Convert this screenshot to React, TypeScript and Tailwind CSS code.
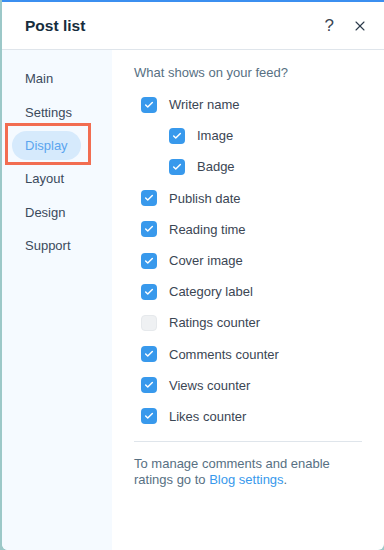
import { Check, X } from "lucide-react";

type Option = { label: string; checked: boolean; nested?: boolean };

const menu = ["Main", "Settings", "Display", "Layout", "Design", "Support"];

const options: Option[] = [
  { label: "Writer name", checked: true },
  { label: "Image", checked: true, nested: true },
  { label: "Badge", checked: true, nested: true },
  { label: "Publish date", checked: true },
  { label: "Reading time", checked: true },
  { label: "Cover image", checked: true },
  { label: "Category label", checked: true },
  { label: "Ratings counter", checked: false },
  { label: "Comments counter", checked: true },
  { label: "Views counter", checked: true },
  { label: "Likes counter", checked: true },
];

function Checkbox({ checked }: { checked: boolean }) {
  if (!checked) {
    return <span className="h-4 w-4 shrink-0 rounded-[4px] border border-[#e6e9ec] bg-[#eff1f3]" />;
  }
  return (
    <span className="flex h-4 w-4 shrink-0 items-center justify-center rounded-[4px] bg-[#3899ec]">
      <Check size={10} strokeWidth={3.5} className="text-white" />
    </span>
  );
}

export default function App() {
  return (
    <div
      className="flex h-[550px] w-[384px] bg-[#9cc8c8] pl-[2px] text-[#3b4654]"
      style={{ fontFamily: '"Liberation Sans", Arial, sans-serif' }}
    >
      <div className="relative flex flex-1 flex-col overflow-hidden rounded-b-[6px] bg-white">
        <div className="h-[2px] bg-[#3b8ff0]" />
        <header className="flex h-[48px] items-center border-b border-[#dfe5eb] pl-[23px] pr-[16px]">
          <h1 className="flex-1 pt-[1px] text-[15.5px] font-bold text-[#162d3d]">Post list</h1>
          <span className="mr-[18px] text-[17px] text-[#3b4654]">?</span>
          <X size={16} strokeWidth={1.6} className="text-[#2b3a4a]" />
        </header>

        <div className="flex flex-1">
          <nav className="flex w-[110px] flex-col bg-[#f5faff] pt-[12px]">
            {menu.map((item) => (
              <div key={item} className="flex h-[33.4px] items-center pl-[10px]">
                {item === "Display" ? (
                  <span className="rounded-full bg-[#d6eafc] px-[13px] py-[6px] text-[13px] leading-[17px] text-[#5ba5ef]">
                    {item}
                  </span>
                ) : (
                  <span className="px-[13px] text-[13px] leading-[17px] text-[#3b4a5c]">{item}</span>
                )}
              </div>
            ))}
          </nav>

          <main className="flex-1 pl-[22px] pr-[22px] pt-[14px]">
            <p className="text-[13px] leading-[17px] text-[#577083]">What shows on your feed?</p>
            <ul className="mt-[8px] flex flex-col pl-[7px]">
              {options.map((o) => (
                <li
                  key={o.label}
                  className={`flex h-[31.2px] items-center gap-[12px] ${o.nested ? "pl-[28px]" : ""}`}
                >
                  <Checkbox checked={o.checked} />
                  <span className="text-[13px] leading-[17px] text-[#3b4654]">{o.label}</span>
                </li>
              ))}
            </ul>
            <div className="mt-[9px] h-px bg-[#dfe5eb]" />
            <p className="mt-[14px] text-[13px] leading-[16px] text-[#577083]">
              To manage comments and enable
              <br />
              ratings go to <a className="text-[#3899ec]">Blog settings</a>.
            </p>
          </main>
        </div>

        <div className="absolute left-[3px] top-[123px] h-[42px] w-[86px] border-[3px] border-[#f26d51]" />
      </div>
    </div>
  );
}
